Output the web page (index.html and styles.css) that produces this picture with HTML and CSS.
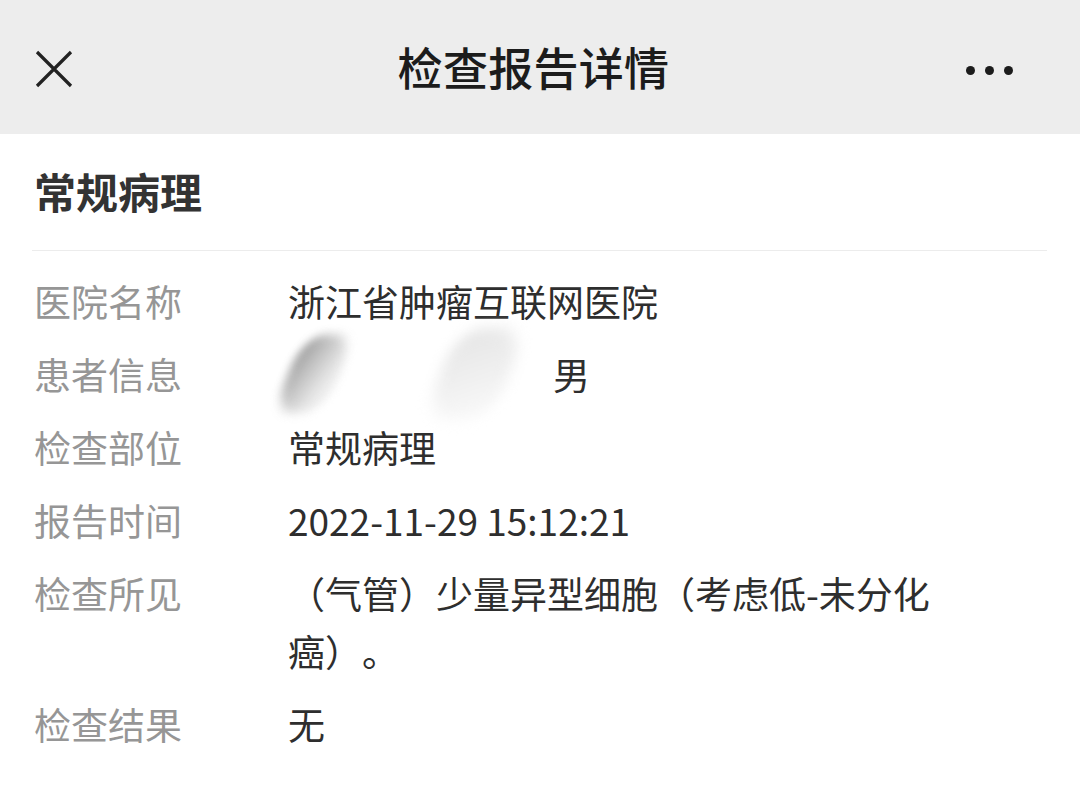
FILE: index.html
```html
<!DOCTYPE html>
<html lang="zh-CN">
<head>
    <meta charset="UTF-8">
    <meta name="viewport" content="width=device-width, initial-scale=1.0">
    <title>检查报告详情</title>
    <link rel="stylesheet" href="styles.css">
</head>
<body>
    <header class="topbar">
        <div class="topbar-close">
            <svg width="38" height="38" viewBox="0 0 38 38">
                <path d="M2 2 L36 36 M36 2 L2 36" stroke="#222" stroke-width="3.2" fill="none"/>
            </svg>
        </div>
        <h1 class="topbar-title">检查报告详情</h1>
        <div class="topbar-more">
            <span class="dot"></span>
            <span class="dot"></span>
            <span class="dot"></span>
        </div>
    </header>

    <section class="report">
        <h2 class="report-title">常规病理</h2>

        <div class="rows">
            <div class="row">
                <div class="label">医院名称</div>
                <div class="value">浙江省肿瘤互联网医院</div>
            </div>
            <div class="row">
                <div class="label">患者信息</div>
                <div class="value patient">
                    <span class="smudge smudge-dark"></span>
                    <span class="smudge smudge-light"></span>
                    <span class="sex">男</span>
                </div>
            </div>
            <div class="row">
                <div class="label">检查部位</div>
                <div class="value">常规病理</div>
            </div>
            <div class="row">
                <div class="label">报告时间</div>
                <div class="value">2022-11-29 15:12:21</div>
            </div>
            <div class="row">
                <div class="label">检查所见</div>
                <div class="value">（气管）少量异型细胞（考虑低-未分化癌）。</div>
            </div>
            <div class="row">
                <div class="label">检查结果</div>
                <div class="value">无</div>
            </div>
        </div>
    </section>
</body>
</html>
```

FILE: styles.css
```css
body {
    margin: 0;
    padding: 0;
    background-color: #fff;
    font-family: "Noto Sans CJK SC", "Noto Sans", sans-serif;
    color: #2e2e2e;
    text-spacing-trim: space-all;
}

/* top navigation bar */
.topbar {
    height: 134px;
    box-sizing: border-box;
    padding: 4px 67px 0 34px;
    background-color: #ededed;
    display: grid;
    grid-template-columns: 1fr auto 1fr;
    align-items: center;
}
.topbar-close {
    justify-self: start;
    width: 40px;
    height: 40px;
    display: flex;
    align-items: center;
    justify-content: center;
}
.topbar-title {
    margin: -6px 0 0 20px;
    font-size: 45px;
    font-weight: 500;
    color: #1c1c1c;
    letter-spacing: 0.3px;
    line-height: 1;
}
.topbar-more {
    justify-self: end;
    display: flex;
    gap: 10px;
    margin-top: 2px;
}
.dot {
    width: 9px;
    height: 9px;
    border-radius: 50%;
    background-color: #1c1c1c;
}

/* report card */
.report {
    padding: 0 33px 0 32px;
}
.report-title {
    margin: 0;
    padding: 27px 0 29px 2px;
    font-size: 42px;
    line-height: 60px;
    font-weight: 700;
    color: #333;
    border-bottom: 1.5px solid #ececec;
}
.rows {
    padding-top: 21px;
    display: flex;
    flex-direction: column;
    gap: 15px;
}
.row {
    display: grid;
    grid-template-columns: 256px 668px;
    font-size: 37px;
    line-height: 58px;
}
.label {
    color: #969696;
    padding-left: 2px;
}
.value {
    color: #2e2e2e;
}

/* blurred-out patient name */
.patient {
    height: 58px;
    display: flex;
    align-items: center;
}
.smudge {
    flex: none;
    display: inline-block;
    border-radius: 40%;
}
.smudge-dark {
    width: 52px;
    height: 78px;
    margin-left: 0;
    background: linear-gradient(110deg, #7e7e7e 0%, #b4b4b4 35%, #e2e2e2 70%, #f8f8f8 100%);
    transform: skewX(-22deg);
    filter: blur(5px);
    opacity: 0.85;
}
.smudge-light {
    width: 70px;
    height: 92px;
    margin-left: 100px;
    background: linear-gradient(160deg, #e4e4e4 0%, #f0f0f0 55%, #fbfbfb 100%);
    transform: skewX(-20deg);
    filter: blur(7px);
}
.sex {
    margin-left: 43px;
}
```
